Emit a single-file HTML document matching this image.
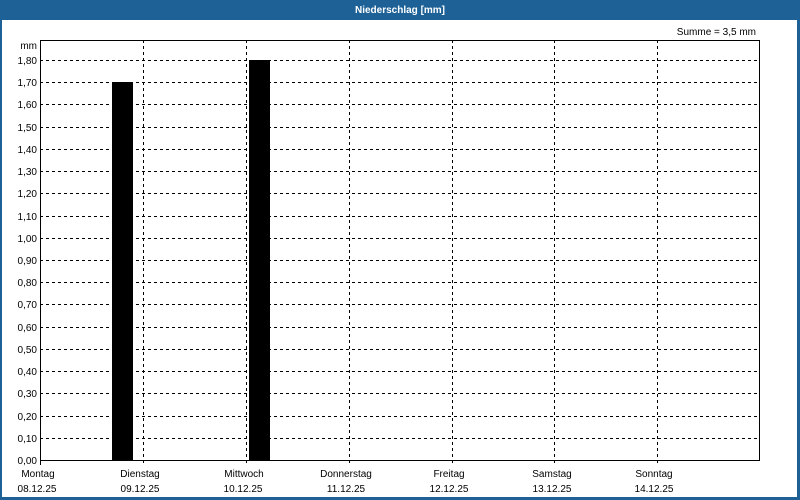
<!DOCTYPE html>
<html><head><style>
html,body{margin:0;padding:0;width:800px;height:500px;overflow:hidden;background:#1d6197}
svg{display:block}
text{font-family:"Liberation Sans",sans-serif;font-size:10px;fill:#000}
</style></head><body>
<svg width="800" height="500" xmlns="http://www.w3.org/2000/svg">
<rect x="0" y="0" width="800" height="500" fill="#1d6197"/>
<rect x="2" y="20" width="795" height="477" fill="#fff"/>
<text x="400" y="13" text-anchor="middle" style="fill:#fff;font-weight:bold;font-size:10px">Niederschlag [mm]</text>
<text x="756" y="35" text-anchor="end">Summe = 3,5 mm</text>
<text x="37" y="49" text-anchor="end">mm</text>
<g stroke="#000" stroke-width="1" stroke-dasharray="3,3" shape-rendering="crispEdges">
<line x1="40" x2="760" y1="60.5" y2="60.5"/><line x1="40" x2="760" y1="82.5" y2="82.5"/><line x1="40" x2="760" y1="104.5" y2="104.5"/><line x1="40" x2="760" y1="127.5" y2="127.5"/><line x1="40" x2="760" y1="149.5" y2="149.5"/><line x1="40" x2="760" y1="171.5" y2="171.5"/><line x1="40" x2="760" y1="193.5" y2="193.5"/><line x1="40" x2="760" y1="216.5" y2="216.5"/><line x1="40" x2="760" y1="238.5" y2="238.5"/><line x1="40" x2="760" y1="260.5" y2="260.5"/><line x1="40" x2="760" y1="282.5" y2="282.5"/><line x1="40" x2="760" y1="304.5" y2="304.5"/><line x1="40" x2="760" y1="327.5" y2="327.5"/><line x1="40" x2="760" y1="349.5" y2="349.5"/><line x1="40" x2="760" y1="371.5" y2="371.5"/><line x1="40" x2="760" y1="393.5" y2="393.5"/><line x1="40" x2="760" y1="416.5" y2="416.5"/><line x1="40" x2="760" y1="438.5" y2="438.5"/>
<line y1="40" y2="465" x1="143.5" x2="143.5"/><line y1="40" y2="465" x1="246.5" x2="246.5"/><line y1="40" y2="465" x1="349.5" x2="349.5"/><line y1="40" y2="465" x1="452.5" x2="452.5"/><line y1="40" y2="465" x1="554.5" x2="554.5"/><line y1="40" y2="465" x1="657.5" x2="657.5"/>
</g>
<rect x="112" y="82" width="21" height="378" fill="#000"/>
<rect x="249" y="60" width="21" height="400" fill="#000"/>
<rect x="40.5" y="40.5" width="719" height="420" fill="none" stroke="#000" stroke-width="1" shape-rendering="crispEdges"/>
<line x1="40.5" x2="40.5" y1="460" y2="465" stroke="#000" shape-rendering="crispEdges"/>
<g text-anchor="end">
<text x="37" y="64">1,80</text><text x="37" y="86">1,70</text><text x="37" y="108">1,60</text><text x="37" y="131">1,50</text><text x="37" y="153">1,40</text><text x="37" y="175">1,30</text><text x="37" y="197">1,20</text><text x="37" y="220">1,10</text><text x="37" y="242">1,00</text><text x="37" y="264">0,90</text><text x="37" y="286">0,80</text><text x="37" y="308">0,70</text><text x="37" y="331">0,60</text><text x="37" y="353">0,50</text><text x="37" y="375">0,40</text><text x="37" y="397">0,30</text><text x="37" y="420">0,20</text><text x="37" y="442">0,10</text><text x="37" y="464">0,00</text>
</g>
<g text-anchor="middle">
<text x="38" y="477">Montag</text><text x="37" y="492">08.12.25</text>
<text x="140" y="477">Dienstag</text><text x="140" y="492">09.12.25</text>
<text x="244" y="477">Mittwoch</text><text x="243" y="492">10.12.25</text>
<text x="346" y="477">Donnerstag</text><text x="346" y="492">11.12.25</text>
<text x="449" y="477">Freitag</text><text x="449" y="492">12.12.25</text>
<text x="552" y="477">Samstag</text><text x="552" y="492">13.12.25</text>
<text x="654" y="477">Sonntag</text><text x="654" y="492">14.12.25</text>
</g>
</svg>
</body></html>
